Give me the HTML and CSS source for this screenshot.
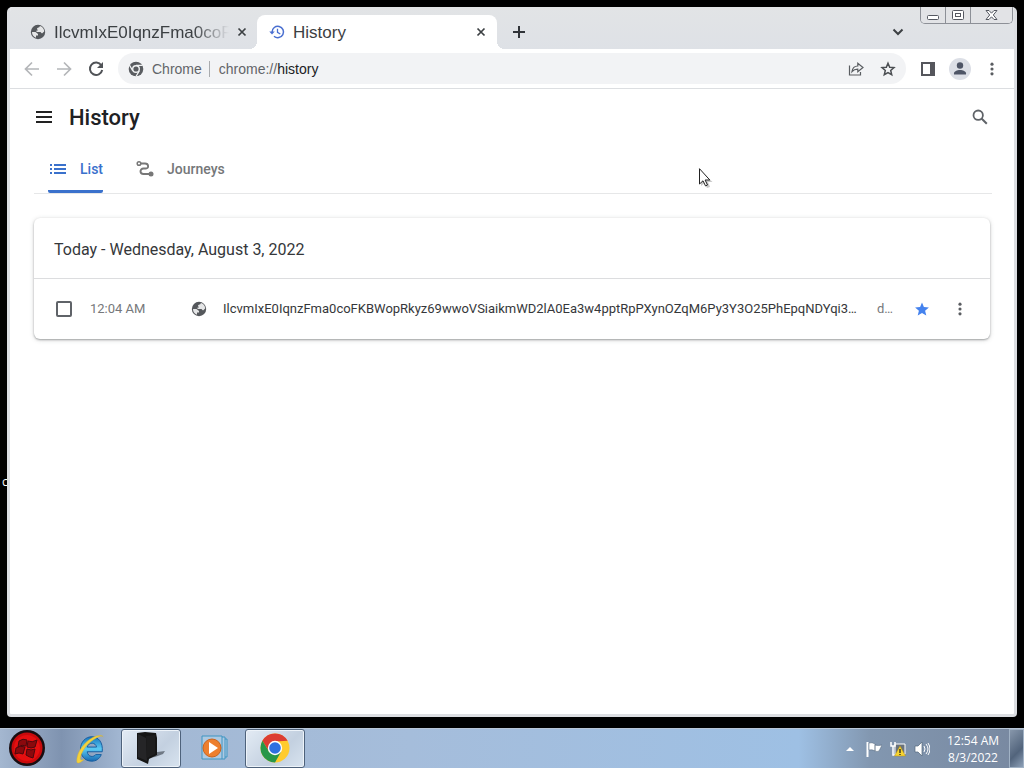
FILE: index.html
```html
<!DOCTYPE html>
<html lang="en">
<head>
<meta charset="utf-8">
<title>History</title>
<link rel="stylesheet" href="styles.css">
</head>
<body>
<svg class="defs" aria-hidden="true">
  <symbol id="globe" viewBox="0 0 16 16"><circle cx="8" cy="8" r="7.200" fill="#55585c"/><path d="M2 8h3.500l2.500 2v1.500H6v2.300A6.200 6.200 0 0 1 2 8zM7 5c0-1 .8-1.500 2-1.500l1-1.400a6.200 6.200 0 0 1 4.200 5.400L12 9.500 10.500 8H6.500V6.500H8z" fill="#fff" opacity=".85"/></symbol>
  <symbol id="close" viewBox="0 0 10 10"><path d="M1.500 1.500l7 7M8.500 1.500l-7 7" stroke="#3c4043" stroke-width="1.700"/></symbol>
  <symbol id="dots" viewBox="0 0 16 16"><g fill="#5a5d61"><circle cx="8" cy="2.500" r="1.800"/><circle cx="8" cy="8" r="1.800"/><circle cx="8" cy="13.500" r="1.800"/></g></symbol>
</svg>
<div class="desktop">
  <span class="desk-label">c</span>
  <div class="window">
    <header class="tabstrip">
      <div class="tab tab-first">
        <svg class="i16"><use href="#globe"/></svg>
        <span class="tab-title fade">IlcvmIxE0IqnzFma0coF</span>
        <button class="plain" aria-label="Close tab"><svg class="i10"><use href="#close"/></svg></button>
      </div>
      <div class="tab tab-active">
        <svg class="i16" viewBox="0 0 16 16"><path d="M3.100 8A5.700 5.700 0 1 1 5 12.200" fill="none" stroke="#4a6fd0" stroke-width="1.500"/><path d="M.3 7.500h5.500L3 10.500z" fill="#4a6fd0"/><path d="M8.500 4.800v3.500l2.800 1.700" fill="none" stroke="#4a6fd0" stroke-width="1.300"/></svg>
        <span class="tab-title">History</span>
        <button class="plain" aria-label="Close tab"><svg class="i10"><use href="#close"/></svg></button>
      </div>
      <button class="plain newtab" aria-label="New tab"><svg class="i12" viewBox="0 0 12 12"><path d="M6 0v12M0 6h12" stroke="#303338" stroke-width="2"/></svg></button>
      <button class="plain tabsearch" aria-label="Search tabs"><svg class="i12" viewBox="0 0 12 12"><path d="M1.500 3.500L6 8l4.500-4.500" fill="none" stroke="#3c4043" stroke-width="2"/></svg></button>
      <div class="winbtns">
        <button aria-label="Minimize"><svg width="13" height="12" viewBox="0 0 13 12"><rect x=".5" y="6.500" width="11" height="4" rx="1" fill="#fff" stroke="#555861"/></svg></button>
        <button aria-label="Maximize"><svg width="13" height="12" viewBox="0 0 13 12"><rect x=".5" y="1.500" width="11" height="9" rx="1" fill="#fff" stroke="#555861"/><rect x="3.500" y="4.500" width="5" height="3" fill="#fff" stroke="#555861"/></svg></button>
        <button class="wclose" aria-label="Close"><svg width="13" height="12" viewBox="0 0 13 12"><path d="M1 1.500h3l2.500 2.700L9 1.500h3L8.300 6l3.700 4.500H9L6.500 7.800 4 10.500H1L4.700 6z" fill="#fff" stroke="#555861"/></svg></button>
      </div>
    </header>
    <nav class="toolbar">
      <button class="plain tool" aria-label="Back"><svg class="i16" viewBox="0 0 16 16"><path d="M15 8H2M8 1.500L1.500 8 8 14.500" fill="none" stroke="#b4b6b9" stroke-width="1.700"/></svg></button>
      <button class="plain tool" aria-label="Forward"><svg class="i16" viewBox="0 0 16 16"><path d="M1 8h13M8 1.500L14.500 8 8 14.500" fill="none" stroke="#b4b6b9" stroke-width="1.700"/></svg></button>
      <button class="plain tool" aria-label="Reload"><svg class="i16" viewBox="0 0 16 16"><path d="M13.300 4.300A6.200 6.200 0 1 0 14.200 9" fill="none" stroke="#505357" stroke-width="2"/><path d="M15 1v6H9z" fill="#505357"/></svg></button>
      <div class="omnibox">
        <svg class="i16" viewBox="0 0 16 16"><circle cx="8" cy="8" r="7.300" fill="#5a5d61"/><circle cx="8" cy="8" r="3.300" fill="#5a5d61" stroke="#f1f3f4" stroke-width="1.400"/><path d="M8 4.300h6.700M4.700 9.800L1.400 4M11.200 10L8 15.500" stroke="#f1f3f4" stroke-width="1.300"/></svg>
        <span class="origin">Chrome</span>
        <span class="url">chrome://<b>history</b></span>
        <button class="plain tool" aria-label="Share"><svg class="i16" viewBox="0 0 16 16"><path d="M1.500 4.500v9.500h11v-3M4 10.500C4.500 7 6.500 5 9.800 5V2.200L15 6.500l-5.200 4.300V8.200C7 8.200 5.300 9 4 10.500z" fill="none" stroke="#5a5d61" stroke-width="1.200"/></svg></button>
        <button class="plain tool" aria-label="Bookmark"><svg class="i16" viewBox="0 0 16 16"><path d="M8 2.200l1.700 4 4.300.4-3.300 2.900 1 4.200L8 11.500l-3.700 2.200 1-4.200L2 6.600l4.300-.4z" fill="none" stroke="#4c4f53" stroke-width="1.500"/></svg></button>
      </div>
      <button class="plain tool" aria-label="Side panel"><svg class="i16" viewBox="0 0 16 16"><path d="M1 1h14v14H1z" fill="#55565c"/><path d="M3 3h7v10H3z" fill="#fff"/></svg></button>
      <button class="plain tool" aria-label="Profile"><svg class="i22" viewBox="0 0 22 22"><circle cx="11" cy="11" r="11" fill="#dcdfe6"/><circle cx="11" cy="7.500" r="3.200" fill="#4e5566"/><path d="M5 16.500v-1.300c0-2 3-3.300 6-3.300s6 1.300 6 3.300v1.300z" fill="#4e5566"/></svg></button>
      <button class="plain tool" aria-label="Menu"><svg class="i14"><use href="#dots"/></svg></button>
    </nav>
    <main class="page">
      <div class="page-head">
        <button class="plain" aria-label="Main menu"><svg class="i16" viewBox="0 0 16 16"><path d="M0 3h16M0 8h16M0 13h16" stroke="#222" stroke-width="2"/></svg></button>
        <h1>History</h1>
        <button class="plain" aria-label="Search history"><svg class="i16" viewBox="0 0 16 16"><circle cx="6.200" cy="6.200" r="4.700" fill="none" stroke="#5f6368" stroke-width="1.800"/><path d="M9.500 9.500l5.300 5.300" stroke="#5f6368" stroke-width="2"/></svg></button>
      </div>
      <div class="views">
        <a class="view selected" href="#list"><svg class="i16" viewBox="0 0 16 16"><path d="M4 4h12M4 8h12M4 12h12" stroke="#3a71cc" stroke-width="1.900"/><path d="M0 4h2M0 8h2M0 12h2" stroke="#3a71cc" stroke-width="1.900"/></svg>List</a>
        <a class="view journeys" href="#journeys"><svg class="i18" viewBox="0 0 18 18"><path d="M4.500 3.500H9c4 0 4 5 1 5H7.500c-4 0-4 5.500 0 5.500H13" fill="none" stroke="#777" stroke-width="1.900"/><circle cx="3" cy="3.500" r="1.800" fill="#fff" stroke="#777" stroke-width="1.500"/><circle cx="15" cy="14" r="2.500" fill="#777"/></svg>Journeys</a>
      </div>
      <section class="card">
        <h2>Today - Wednesday, August 3, 2022</h2>
        <div class="row">
          <input type="checkbox" id="entry">
          <label for="entry" class="time">12:04 AM</label>
          <svg class="i16"><use href="#globe"/></svg>
          <a class="entry" href="#entry">IlcvmIxE0IqnzFma0coFKBWopRkyz69wwoVSiaikmWD2lA0Ea3w4pptRpPXynOZqM6Py3Y3O25PhEpqNDYqi3…</a>
          <span class="domain">d…</span>
          <button class="plain star" aria-label="Bookmarked"><svg class="i14" viewBox="0 0 14 14"><path d="M7 .5l1.900 4.600 5 .4-3.800 3.200 1.200 4.800L7 11l-4.300 2.500 1.200-4.800L.1 5.500l5-.4z" fill="#4482ee"/></svg></button>
          <button class="plain" aria-label="Actions"><svg class="i14"><use href="#dots"/></svg></button>
        </div>
      </section>
    </main>
  </div>
  <svg class="cursor" width="16" height="22" viewBox="0 0 16 22"><path d="M3 3v15l3.500-3 2.500 5 3-1-2-5h4.500z" fill="#888" opacity=".45"/><path d="M1.500.7v15.300l3.500-3.200 2.500 5.100 2-.9-2.400-5h4.700z" fill="#fff" stroke="#222"/></svg>
</div>
<footer class="taskbar">
  <button class="task start" aria-label="Start"><svg width="38" height="38" viewBox="0 0 38 38"><circle cx="19" cy="19" r="18" fill="#180d11"/><circle cx="19" cy="19" r="15.500" fill="#c90a0c"/><circle cx="19" cy="19" r="13" fill="#e50f10"/><path d="M11 12q4-3 8-1l-1 6q-4-2-8 1zM20 12q4 2 9-1l-2 7q-4 2-8 0zM8 19q4-3 9-1l-2 7q-4-2-8 0zM19 20q4 2 8 0l-2 9q-4-1-7-3z" fill="#8a090d" stroke="#4a090d"/></svg></button>
  <button class="task ie" aria-label="Internet Explorer"><svg width="32" height="32" viewBox="0 0 34 34"><defs><linearGradient id="ieg" x2="0" y2="1"><stop stop-color="#1874bd"/><stop offset=".5" stop-color="#5bcaf2"/><stop offset="1" stop-color="#1769b2"/></linearGradient></defs><path d="M30 21H14c1 6 7 6 9 3h6c-2 5-6 7-10 7-8 0-12-6-12-13S12 5 19 5s12 6 11 16zM14 16h10c-1-5-8-6-10 0z" fill="url(#ieg)" stroke="#145b9d"/><path d="M31 5C25-1 3 14 3 31c0 4 5 1 8-2-5 2-5 0-3-6C12 14 20 8 26 5c3-1 4-1 5 0z" fill="#f4d13d" stroke="#d9b52a" stroke-width=".5"/></svg></button>
  <button class="task open" aria-label="Folder"><svg width="34" height="34" viewBox="0 0 34 34"><path d="M16 22l15-2-2 3-8 3-7 1z" fill="#59626d" opacity=".8"/><path d="M3 2l8-1 11 1 1 5v17l-8 4-1 5L3 28z" fill="#151515"/><path d="M4 3l8 4 1 23-9-4z" fill="#252527"/><path d="M12 5l9-1v19l-8 4z" fill="#1d1d1e"/></svg></button>
  <button class="task media" aria-label="Media Player"><svg width="30" height="30" viewBox="0 0 30 30"><path d="M3 3h20v23H3zM23 4h3v22h-3M26 6h2v18h-2" fill="#b4d3ea" fill-opacity=".6" stroke="#3f95c2"/><circle cx="13" cy="15" r="9" fill="#ed7f2e" stroke="#c9641d"/><path d="M10 9l9 6-9 6z" fill="#fff"/></svg></button>
  <button class="task open" aria-label="Google Chrome"><svg width="30" height="30" viewBox="0 0 30 30"><circle cx="15" cy="15" r="14.500" fill="#ffcb2e"/><path d="M2.400 7.800A14.500 14.500 0 0 1 27.600 7.800L15 8.500 9 18.500z" fill="#dc3d32"/><path d="M2.400 7.800A14.500 14.500 0 0 0 15 29.500L21.200 18.500 15 22 9 18.500z" fill="#289749"/><circle cx="15" cy="15" r="7.200" fill="#fff"/><circle cx="15" cy="15" r="5.800" fill="#2e70e0"/></svg></button>
  <div class="tray">
    <svg width="8" height="4" viewBox="0 0 8 4"><path d="M0 4l4-4 4 4z" fill="#fff"/></svg>
    <svg width="16" height="16" viewBox="0 0 16 16"><path d="M1.500 1v15" stroke="#fff" stroke-width="2"/><path d="M3 2q3-1 6 1v7q-3-2-6-1zM9 4q3 1 7 0l-3 6q-2 1-4 0z" fill="#fff" stroke="#4d6077" stroke-width=".5"/></svg>
    <svg width="16" height="16" viewBox="0 0 16 16"><path d="M5 3h10v10H5z" fill="#69727c" stroke="#fff"/><path d="M1 1v4h4V1M3 5v9h5" fill="none" stroke="#fff" stroke-width="1.500"/><path d="M10 5l5.500 10h-11z" fill="#f7d430" stroke="#b48e10" stroke-width=".5"/><path d="M10 8v4M10 13v1" stroke="#222" stroke-width="1.300"/></svg>
    <svg width="16" height="16" viewBox="0 0 16 16"><path d="M1 5h3l4-4v14l-4-4H1z" fill="#fff" stroke="#53677c" stroke-width=".7"/><path d="M10 5q2 3 0 6M12 3q4 5 0 10M14 2q4 6 0 12" fill="none" stroke="#fff"/></svg>
  </div>
  <div class="clock"><span>12:54 AM</span><span>8/3/2022</span></div>
  <button class="peek" aria-label="Show desktop"></button>
</footer>
</body>
</html>
```
FILE: styles.css
```css
* { box-sizing: border-box; }
body {
  margin: 0;
  height: 100vh;
  display: flex;
  flex-direction: column;
  overflow: hidden;
  background: #000;
  font-family: Roboto, "Liberation Sans", sans-serif;
}
.defs { position: absolute; width: 0; height: 0; }
svg { display: block; flex: none; }
button, input { margin: 0; }
.plain { border: 0; padding: 0; background: none; display: flex; align-items: center; justify-content: center; }
.i10 { width: 10px; height: 10px; }
.i12 { width: 12px; height: 12px; }
.i14 { width: 14px; height: 14px; }
.i16 { width: 16px; height: 16px; }
.i18 { width: 18px; height: 18px; }
.i22 { width: 22px; height: 22px; }

.desktop { position: relative; flex: 1; min-height: 0; display: flex; padding: 7px 7px 11px; }
.desk-label { position: absolute; left: 2px; top: 474px; color: #fff; font: 12px/16px "Open Sans", sans-serif; }
.cursor { position: absolute; left: 698px; top: 168px; }
.window {
  position: relative;
  flex: 1;
  min-width: 0;
  display: flex;
  flex-direction: column;
  border: solid #dcdee2;
  border-width: 0 3px 3px;
  border-radius: 5px 5px 4px 4px;
  background: #fff;
  overflow: hidden;
}

.tabstrip { display: flex; height: 42px; padding-top: 8px; background: linear-gradient(#e2e4e6, #dee1e6); font-family: "Liberation Sans", Arial, sans-serif; }
.tab { display: flex; align-items: center; gap: 8px; height: 34px; padding: 0 11px 0 12px; font-size: 17px; color: #3c4043; }
.tab-first { width: 247px; padding-left: 20px; padding-right: 10px; }
.tab-active { position: relative; width: 240px; background: #fff; border-radius: 8px 8px 0 0; }
.tab-active::before, .tab-active::after { content: ""; position: absolute; bottom: 0; width: 8px; height: 8px; }
.tab-active::before { left: -8px; background: radial-gradient(circle at 0 0, transparent 8px, #fff 8px); }
.tab-active::after { right: -8px; background: radial-gradient(circle at 100% 0, transparent 8px, #fff 8px); }
.tab-title { flex: 1; min-width: 0; padding-top: 2px; overflow: hidden; white-space: nowrap; line-height: 24px; }
.fade { mask-image: linear-gradient(90deg, #000 80%, transparent); }
.newtab { width: 44px; height: 34px; }
.tabsearch { width: 44px; height: 34px; margin-left: auto; }
.winbtns { display: flex; height: 17px; margin: -8px 1px 0 0; border: 1px solid #8d9097; border-top: 0; border-radius: 0 0 5px 5px; overflow: hidden; }
.winbtns button { display: flex; justify-content: center; align-items: center; width: 25px; padding: 0; border: 0; border-right: 1px solid #8d9097; background: #e2e3e6; }
.winbtns .wclose { width: 41px; border-right: 0; }

.toolbar { display: flex; align-items: center; height: 40px; padding: 0 6px; border-bottom: 1px solid #dcdee1; font-family: "Liberation Sans", Arial, sans-serif; }
.tool { width: 32px; height: 32px; }
.omnibox { flex: 1; display: flex; align-items: center; height: 31px; margin: 0 6px; padding: 0 2px 0 10px; border-radius: 16px; background: #f2f3f5; font-size: 14px; color: #626569; }
.origin { margin-left: 8px; padding-right: 7px; border-right: 1px solid #a9abae; line-height: 16px; }
.url { flex: 1; margin-left: 9px; }
.url b { font-weight: 400; color: #202124; }

.page { flex: 1; padding: 0 22px 0 24px; }
.page-head { display: flex; align-items: center; height: 56px; padding: 0 4px 0 2px; }
.page-head h1 { flex: 1; margin: 0 0 0 17px; font-size: 22px; font-weight: 500; color: #202124; }
.views { display: flex; gap: 33px; height: 49px; padding-left: 14px; border-bottom: 1px solid #e6e7e8; }
.view { display: flex; align-items: center; gap: 14px; height: 48px; padding: 2px 0 0 2px; border-bottom: 3px solid transparent; font-size: 14px; font-weight: 500; color: #757779; text-decoration: none; }
.journeys { padding-left: 0; gap: 13px; }
.selected { color: #3a71cc; border-radius: 2px; background: linear-gradient(#3a71cc, #3a71cc) bottom / 100% 3px no-repeat border-box; }
.card { margin: 24px 2px 24px 0; border-radius: 6px; background: #fff; box-shadow: 0 1px 2px rgba(60,64,67,.4), 0 1px 5px rgba(60,64,67,.2); }
.card h2 { margin: 0; padding: 22px 20px 18px; border-bottom: 1px solid #dcdddf; font-size: 16px; font-weight: 400; line-height: 20px; color: #35373a; }
.row { display: flex; align-items: center; height: 60px; padding: 0 23px 0 22px; font-size: 13px; line-height: 16px; }
.row input { appearance: none; width: 16px; height: 16px; border: 2px solid #5f6368; border-radius: 2px; background: #fff; }
.time { width: 101px; margin-left: 18px; color: #76787b; }
.entry { flex: 1; min-width: 0; margin-left: 16px; overflow: hidden; white-space: nowrap; color: #35373a; text-decoration: none; }
.domain { width: 18px; color: #76787b; }
.star { margin: 0 24px 0 20px; }

.taskbar { display: flex; height: 40px; border-top: 1px solid #b9c7d8; background: linear-gradient(90deg, #a4b7d0, #7f93b0 6%, #a3b8d3 12%, #a5bddb 40%, #9ec0e4 78%, #8297b0 85%, #7888a0); }
.task { display: flex; align-items: center; justify-content: center; width: 60px; padding: 0 0 2px; border: 1px solid transparent; background: none; }
.start { width: 54px; }
.ie { width: 67px; padding-left: 4px; }
.media { width: 64px; padding-left: 2px; }
.open { border-color: #4e627b; border-radius: 3px; background: linear-gradient(135deg, #e3ebf4, #c3d0e0 60%, #d8e3ef); box-shadow: inset 0 0 0 1px #edf3f9; }
.tray { display: flex; align-items: center; gap: 8px; margin-left: auto; }
.tray svg:first-child { margin-right: 4px; }
.clock { display: flex; flex-direction: column; justify-content: center; align-items: center; width: 79px; padding-left: 7px; font: 12px/17px "Open Sans", sans-serif; color: #fff; }
.peek { width: 15px; padding: 0; border: 1px solid #a1b2c5; background: linear-gradient(135deg, #8797ab, #52647c 60%, #8da0b7); }
```
